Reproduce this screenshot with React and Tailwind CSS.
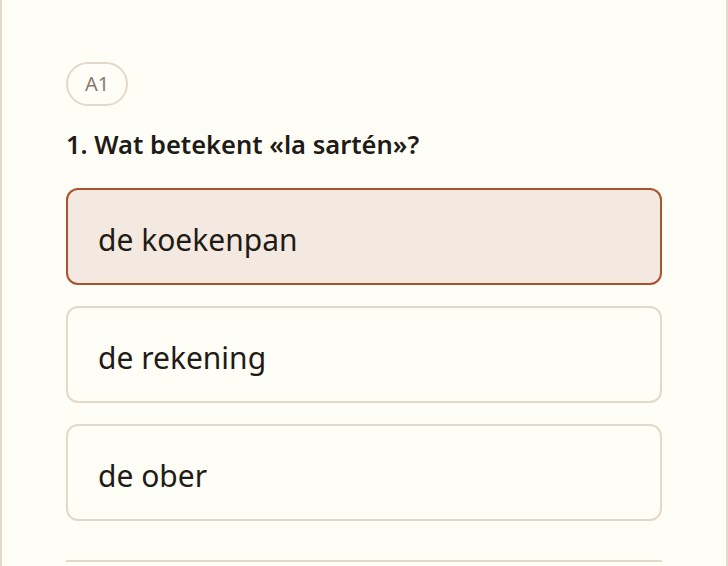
import React, { useState } from "react";

const options = ["de koekenpan", "de rekening", "de ober"];

export default function App() {
    const [selected, setSelected] = useState(0);

    return (
        <div className="min-h-screen bg-[#fefdf6]" style={{ fontFamily: "'Noto Sans', sans-serif" }}>
            <div className="min-h-[566px] border-x-2 border-[#e3d9cb] px-[64px] pt-[62px]">
                <span className="inline-flex h-[44px] items-center rounded-full border-2 border-[#e3d9cb] px-[17px] text-[20px] text-[#857b6f]">
                    A1
                </span>

                <h2 className="mt-[21px] text-[25.5px] font-semibold leading-[34px] text-[#1f1b16]">
                    1. Wat betekent «la sartén»?
                </h2>

                <div className="mt-[27px] flex flex-col gap-[21px]">
                    {options.map((opt, idx) => (
                        <button
                            key={opt}
                            onClick={() => setSelected(idx)}
                            className={`flex h-[97px] w-full items-center rounded-[12px] border-2 px-[30px] pt-[6px] text-left text-[30px] leading-[40px] text-[#1f1b16] ${
                                selected === idx
                                    ? "border-[#a9532f] bg-[#f4e9e1]"
                                    : "border-[#e3d9cb] bg-[#fefdf6]"
                            }`}
                        >
                            {opt}
                        </button>
                    ))}
                </div>

                <div className="mt-[39px] border-t-2 border-[#e3d9cb]" />
            </div>
        </div>
    );
}
